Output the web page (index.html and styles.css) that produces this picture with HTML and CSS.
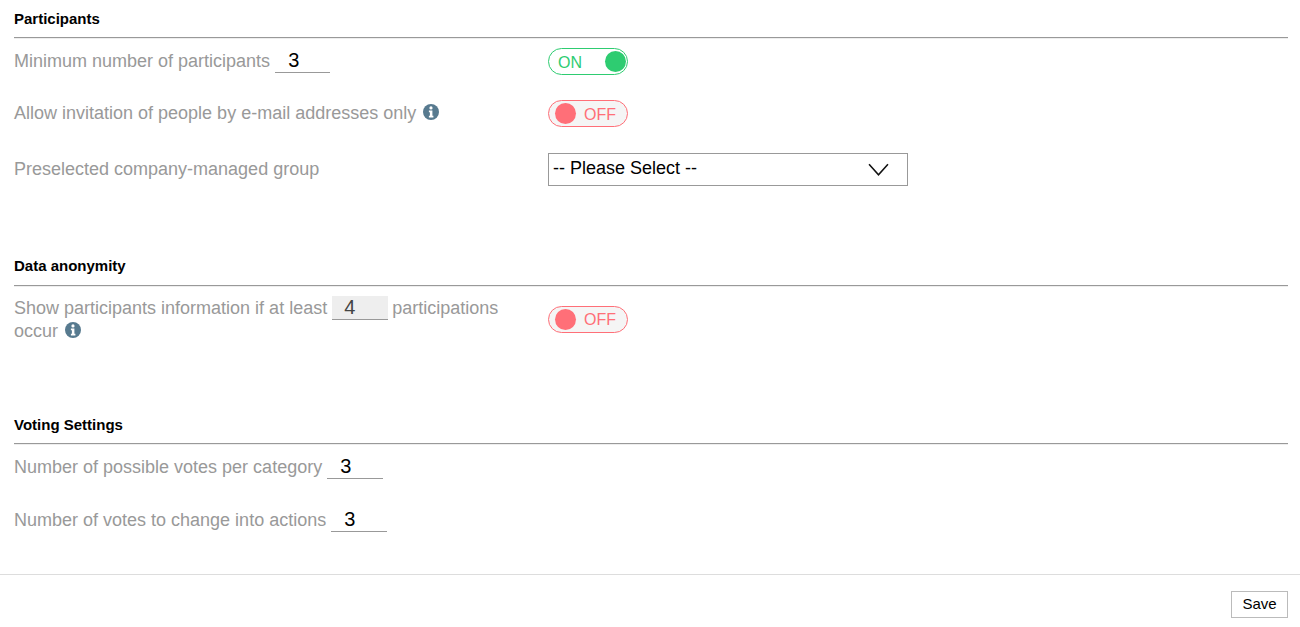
FILE: index.html
```html
<!doctype html>
<html>
<head>
    <meta charset="utf-8">
    <title>Settings</title>
    <link rel="stylesheet" href="styles.css">
</head>
<body>
    <svg class="icon-defs" width="0" height="0">
        <symbol id="info" viewBox="0 0 16 16">
            <circle cx="8" cy="8" r="8"/>
            <circle class="info-mark" cx="8" cy="3.9" r="1.6"/>
            <path class="info-mark" d="M5.9 6.6h3.5v5.2h1v1.6H5.9v-1.6h1v-3.6h-1z"/>
        </symbol>
    </svg>

    <section class="group group-participants">
        <h2>Participants</h2>
        <div class="row">
            <div class="label label-num"><span>Minimum number of participants</span> <input class="num" type="text" value="3"></div>
            <div class="toggle on"><span class="toggle-text">ON</span><span class="knob"></span></div>
        </div>
        <div class="row">
            <div class="label"><span>Allow invitation of people by e-mail addresses only</span> <svg class="info"><use href="#info"/></svg></div>
            <div class="toggle off"><span class="knob"></span><span class="toggle-text">OFF</span></div>
        </div>
        <div class="row">
            <div class="label">Preselected company-managed group</div>
            <div class="select-wrap">
                <select>
                    <option>-- Please Select --</option>
                </select>
                <svg class="chevron" viewBox="0 0 20 12"><path d="M1 1l9 10 9-10"/></svg>
            </div>
        </div>
    </section>

    <section class="group group-anonymity">
        <h2>Data anonymity</h2>
        <div class="row">
            <div class="label"><span>Show participants information if at least</span> <input class="num" type="text" value="4" disabled> <span>participations</span> <span>occur</span> <svg class="info"><use href="#info"/></svg></div>
            <div class="toggle off"><span class="knob"></span><span class="toggle-text">OFF</span></div>
        </div>
    </section>

    <section class="group group-voting">
        <h2>Voting Settings</h2>
        <div class="row">
            <div class="label"><span>Number of possible votes per category</span> <input class="num" type="text" value="3"></div>
        </div>
        <div class="row">
            <div class="label"><span>Number of votes to change into actions</span> <input class="num" type="text" value="3"></div>
        </div>
    </section>

    <footer class="actions">
        <button type="button">Save</button>
    </footer>
</body>
</html>
```

FILE: styles.css
```css
/* Reset */
* { padding:0; margin:0; box-sizing:border-box; }

/* Page Style */
body {
    background-color: #fff;
    font-family: "Liberation Sans", Arial, sans-serif;
    font-size: 18px;
    color: #999;
}
.icon-defs { display:block; height:0; }

/* Sections */
.group { padding: 0 12px 0 14px; }
.group h2 {
    font-size: 15px;
    line-height: 15px;
    font-weight: bold;
    color: #000;
    border-bottom: 1px solid #999;
    box-shadow: 0 1px 0 #eee;
}
.group-participants { height: 258px; padding-top: 11px; }
.group-participants h2 { padding-bottom: 11px; margin-bottom: 10px; }
.group-participants .row { margin-bottom: 25px; }
.group-participants .row:last-child { margin-top: 26px; }
.group-participants .label { padding-bottom: 2px; }
.group-participants .label-num { padding-bottom: 0; }
.group-participants .num { width: 55px; }
.group-anonymity { height: 159px; }
.group-anonymity h2 { padding-bottom: 12px; margin-bottom: 11px; }
.group-anonymity .num { margin-right: -1px; }
.group-anonymity .toggle { margin-top: -1px; }
.group-voting { height: 157px; }
.group-voting h2 { padding-bottom: 11px; margin-bottom: 9px; }
.group-voting .row { height: 27px; margin-bottom: 26px; }
.group-voting .label { padding-top: 2px; }

/* Rows */
.row {
    display: grid;
    grid-template-columns: 534px auto;
    align-items: center;
}
.row .label { max-width: 500px; line-height: 22px; }
.num {
    width: 56px;
    height: 24px;
    margin-top: -1px;
    padding: 0 8px 0 13px;
    border: 0;
    border-bottom: 1px solid #999;
    background: #fff;
    font-family: inherit;
    font-size: 20px;
    color: #000;
    vertical-align: baseline;
}
.num:disabled { background: #eee; color: #444; padding-left: 12px; }
.info {
    width: 16px;
    height: 16px;
    margin-left: 2px;
    fill: #577a8f;
    vertical-align: -1px;
}
.info-mark { fill: #fff; }

/* Toggle */
.toggle {
    display: flex;
    align-items: center;
    justify-content: space-between;
    width: 80px;
    height: 27px;
    border: 1px solid;
    border-radius: 14px;
    font-size: 16px;
    overflow: hidden;
}
.toggle-text { padding-top: 2px; }
.toggle .knob {
    width: 21px;
    height: 21px;
    border-radius: 50%;
}
.toggle.on { border-color: #2ecc71; color: #2ecc71; padding: 0 1px 0 9px; }
.toggle.on .knob { background: #2ecc71; }
.toggle.off { border-color: #ff6f78; color: #ff6f78; background: #f5f5f5; padding: 0 11px 0 6px; }
.toggle.off .knob { background: #ff6f78; }

/* Select */
.select-wrap { position: relative; width: 360px; height: 33px; }
.select-wrap select {
    appearance: none;
    width: 100%;
    height: 100%;
    padding: 0 4px 3px;
    border: 1px solid #999;
    border-radius: 0;
    background: #fff;
    font-family: inherit;
    font-size: 18px;
    color: #000;
}
.chevron {
    position: absolute;
    top: 10px;
    right: 19px;
    width: 21px;
    height: 13px;
    fill: none;
    stroke: #111;
    stroke-width: 1.5;
}

/* Footer */
.actions {
    display: flex;
    justify-content: flex-end;
    height: 53px;
    padding: 16px 12px 0 0;
    border-top: 1px solid #ddd;
}
.actions button {
    width: 57px;
    height: 27px;
    padding-bottom: 2px;
    border: 1px solid #bbb;
    background: #fff;
    font-family: inherit;
    font-size: 15px;
    color: #000;
}
```
